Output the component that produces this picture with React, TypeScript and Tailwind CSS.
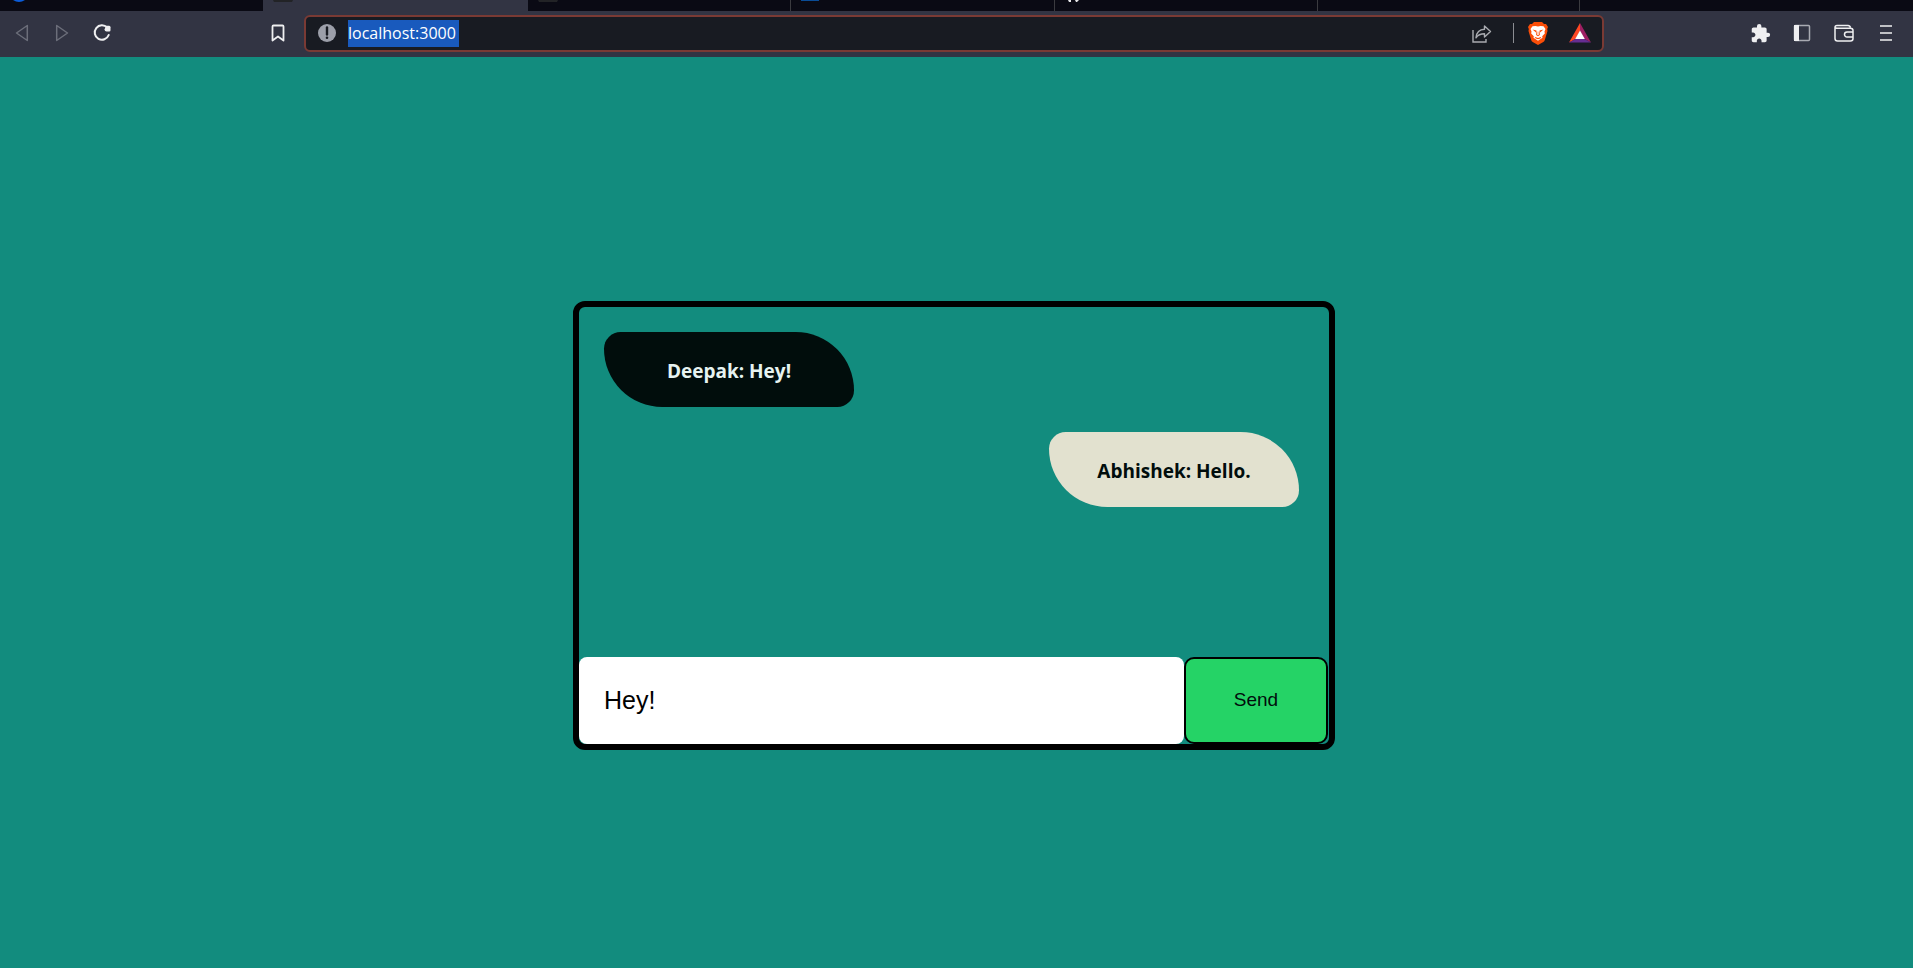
import { useState } from "react";
import type { ReactNode } from "react";
import { MdExtension } from "react-icons/md";

function IconButton({ label, children }: { label: string; children: ReactNode }) {
  return (
    <button type="button" aria-label={label} className="flex size-6 shrink-0 items-center justify-center text-[#efeff1]">
      {children}
    </button>
  );
}

function TabStrip() {
  return (
    <div className="flex h-[11px] shrink-0 items-start overflow-hidden bg-[#0a0a14]">
      <div className="flex w-[263px] pl-[13px]">
        <svg width="12" height="2" viewBox="0 0 12 2"><path d="M0 0h12q-3 2-6 2t-6-2z" fill="#0b5cd8" /></svg>
      </div>
      <div className="flex h-full w-[265px] bg-[#323443] pl-[10px]">
        <svg width="20" height="2" viewBox="0 0 20 2"><path d="M0 0h20l-1 2H1z" fill="#222326" /></svg>
      </div>
      <div className="flex h-full w-[263px] border-r border-[#3b3b40] pl-[10px]">
        <svg width="20" height="2" viewBox="0 0 20 2"><path d="M0 0h20l-1 2H1z" fill="#222326" /></svg>
      </div>
      <div className="flex h-full w-[264px] border-r border-[#3b3b40] pl-[10px]">
        <svg width="18" height="1" viewBox="0 0 18 1"><path d="M0 0h18v1H0z" fill="#0a4c96" /></svg>
      </div>
      <div className="flex h-full w-[263px] border-r border-[#3b3b40] pl-[13px]">
        <svg width="12" height="2" viewBox="0 0 12 2"><path d="M0 0h3v2H1zM7 0h4l-2 2H8z" fill="#e8e8ea" /></svg>
      </div>
      <div className="h-full w-[262px] border-r border-[#3b3b40]" />
    </div>
  );
}

function AddressBar() {
  const [url, setUrl] = useState("localhost:3000");
  return (
    <div className="flex h-[37px] min-w-0 flex-1 items-center rounded-md border-2 border-[#7a3a34] bg-[#181b22] pr-[10px] pl-3">
      <svg width="18" height="18" viewBox="0 0 18 18" className="shrink-0">
        <circle cx="9" cy="9" r="9" fill="#9c9fa9" />
        <path d="M9 3.500v7" stroke="#181b22" strokeWidth="2.400" strokeLinecap="round" />
        <circle cx="9" cy="13.800" r="1.300" fill="#181b22" />
      </svg>
      <div className="ml-3 flex min-w-0 flex-1">
        <input
          aria-label="Address"
          value={url}
          onChange={(e) => setUrl(e.target.value)}
          className="field-sizing-content h-[27px] min-w-[111px] bg-[#195abd] font-['Open_Sans','Noto_Sans',sans-serif] text-[16px] text-white outline-none"
        />
      </div>
      <IconButton label="Share">
        <svg width="24" height="24" viewBox="0 0 24 24" fill="none" stroke="#a9abb0" strokeWidth="1.400">
          <path d="M3 9v12h13v-3" />
          <path d="M14.500 5l6 5.500-6 5.500v-3.200c-4 0-6.500 1-8.500 4 .5-5 3-8.300 8.500-8.500z" strokeLinejoin="round" />
        </svg>
      </IconButton>
      <div className="mr-3 ml-[19px] h-5 w-px bg-[#8b8d92]" />
      <IconButton label="Brave Shields">
        <svg width="20" height="23" viewBox="0 0 20 23">
          <path d="M6 0h8l2 2h2l2 3-.8 2 .3 2-2.700 9q-.4 1.300-1.500 2L10 23l-5.300-3q-1.100-.7-1.500-2L.5 9l.3-2L0 5l2-3h2z" fill="#fb4e08" />
          <path d="M4.500 4.300L7.500 4l2.500.6 2.500-.6 3 .3L17.500 7l-1 2.500.3 2-2.600 2.800.3 1.500-4.500 3-4.500-3 .3-1.500-2.600-2.800.3-2L2.500 7z" fill="#fff" />
          <path d="M4.500 7.500l4 1-.5 2zM15.500 7.500l-4 1 .5 2zM8.500 9.500h3l.4 3.500L10 14.300 8.100 13zM6.500 14.800L10 16l3.500-1.200-1.200 1.800L10 17.200l-2.300-.6z" fill="#fb4e08" />
          <path d="M9.300 8.500h1.400V13H9.300z" fill="#fff" />
        </svg>
      </IconButton>
      <div className="ml-[18px] flex">
        <IconButton label="Brave Rewards">
          <svg width="22" height="20" viewBox="0 0 22 20">
            <path d="M11 0L0 19.500l6.500-3.500L11 8z" fill="#ff4724" />
            <path d="M11 0l11 19.500-6.500-3.500L11 8z" fill="#9e1f63" />
            <path d="M0 19.500h22L15.500 16h-9z" fill="#662d91" />
            <path d="M11 7.500L15.800 16H6.200z" fill="#fff" />
          </svg>
        </IconButton>
      </div>
    </div>
  );
}

function Toolbar() {
  return (
    <div className="flex h-[46px] shrink-0 items-center bg-[#323443] pb-0.5">
      <div className="flex w-[304px] shrink-0 items-center pr-[14px] pl-[10px]">
        <div className="flex flex-1 gap-4">
          <IconButton label="Back">
            <svg width="14" height="18" viewBox="0 0 14 18" fill="none" stroke="#6c6e7a" strokeWidth="1.500" strokeLinejoin="round">
              <path d="M12.300 1.500v15L1.500 9z" />
            </svg>
          </IconButton>
          <IconButton label="Forward">
            <svg width="14" height="18" viewBox="0 0 14 18" fill="none" stroke="#6c6e7a" strokeWidth="1.500" strokeLinejoin="round">
              <path d="M1.700 1.500v15L12.500 9z" />
            </svg>
          </IconButton>
          <IconButton label="Reload">
            <svg width="18" height="18" viewBox="0 0 18 18">
              <path d="M14.200 3.600A7.200 7.200 0 1 0 15.700 11" fill="none" stroke="currentColor" strokeWidth="2" strokeLinecap="round" />
              <path d="M13 1.700l3.200.1q1.300.1 1.300 1.400v3.100q0 1.300-1.300 1.300h-2.700q-1.800-.2-2-2z" fill="currentColor" />
            </svg>
          </IconButton>
        </div>
        <IconButton label="Bookmark this page">
          <svg width="14" height="18" viewBox="0 0 14 18" fill="none" stroke="currentColor" strokeWidth="1.800" strokeLinejoin="round">
            <path d="M1.500 2.500q0-1 1-1h9q1 0 1 1v14L7 12.500l-5.500 4z" />
          </svg>
        </IconButton>
      </div>
      <AddressBar />
      <div className="flex w-[309px] shrink-0 items-center justify-end gap-[18px] pr-[15px]">
        <IconButton label="Extensions">
          <MdExtension size={21} />
        </IconButton>
        <IconButton label="Sidebar">
          <svg width="18" height="18" viewBox="0 0 18 18">
            <rect x="1.500" y="1.500" width="15" height="15" rx="1" fill="none" stroke="#a9aab2" strokeWidth="1.500" />
            <path d="M1 1h5v16H1z" fill="currentColor" />
          </svg>
        </IconButton>
        <IconButton label="Wallet">
          <svg width="20" height="18" viewBox="0 0 20 18" fill="none" stroke="currentColor" strokeWidth="1.500" strokeLinejoin="round">
            <path d="M1 3.500q0-2 2-2h11q2 0 2.500 2.200M1 3.500q.5.700 2 .7h13.500q2.500 0 2.500 2.300v8q0 2.500-2.500 2.500H3.500Q1 17 1 14.500z" />
            <path d="M19 8h-6a2.500 2.500 0 0 0 0 5h6" />
          </svg>
        </IconButton>
        <IconButton label="Menu">
          <svg width="12" height="18" viewBox="0 0 12 18" stroke="currentColor" strokeWidth="1.600">
            <path d="M0 2h12M0 9h12M0 16h12" />
          </svg>
        </IconButton>
      </div>
    </div>
  );
}

type Message = { user: string; text: string; own: boolean };

const initialMessages: Message[] = [
  { user: "Deepak", text: "Hey!", own: false },
  { user: "Abhishek", text: "Hello.", own: true },
];

function Bubble({ user, text, own }: Message) {
  return (
    <li
      className={
        own
          ? "mr-[5px] flex h-[75px] w-[250px] items-center justify-center self-end rounded-[20px_70px] bg-[#e2e1cf] pt-1 text-[#010d0c]"
          : "flex h-[75px] w-[250px] items-center justify-center self-start rounded-[20px_70px] bg-[#010d0c] pt-1 text-[#e6f3f1]"
      }
    >
      {user}: {text}
    </li>
  );
}

export default function App() {
  const [messages, setMessages] = useState(initialMessages);
  const [draft, setDraft] = useState("Hey!");

  const send = () => {
    if (!draft.trim()) return;
    setMessages([...messages, { user: "Deepak", text: draft, own: false }]);
    setDraft("");
  };

  return (
    <div className="flex min-h-screen flex-col bg-[#128c7e]">
      <TabStrip />
      <Toolbar />
      <main className="flex flex-1 items-center justify-center pt-[26px] pr-[5px]">
        <section className="w-full max-w-[762px] rounded-xl border-6 border-black">
          <ul className="flex h-[350px] flex-col gap-[25px] overflow-y-auto p-[25px] font-['Open_Sans','Noto_Sans',sans-serif] text-[19px] font-bold">
            {messages.map((m, i) => (
              <Bubble key={i} {...m} />
            ))}
          </ul>
          <form
            className="flex h-[87px] pr-px font-['Liberation_Sans',Arial,sans-serif]"
            onSubmit={(e) => {
              e.preventDefault();
              send();
            }}
          >
            <input
              aria-label="Message"
              value={draft}
              onChange={(e) => setDraft(e.target.value)}
              className="min-w-0 flex-1 rounded-lg bg-white px-[25px] text-[25px] text-black outline-none"
            />
            <button type="submit" className="w-36 rounded-[10px] border-2 border-black bg-[#25d366] text-[19px] text-[#010d0c]">
              Send
            </button>
          </form>
        </section>
      </main>
    </div>
  );
}
